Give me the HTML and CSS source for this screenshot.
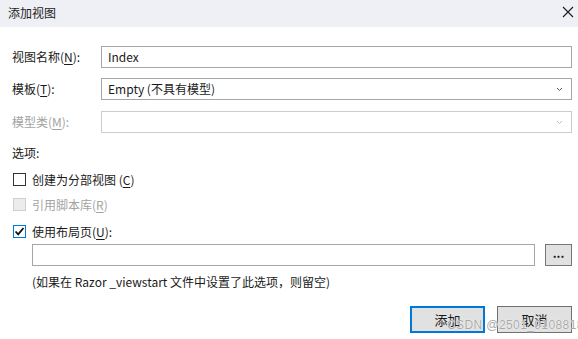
FILE: index.html
```html
<!DOCTYPE html>
<html lang="zh-CN">
<head>
  <meta charset="UTF-8">
  <title>添加视图</title>
  <link rel="stylesheet" href="styles.css">
</head>
<body>

  <div class="titlebar">
    <span class="title">添加视图</span>
    <svg class="close" width="12" height="12" viewBox="0 0 12 12">
      <path d="M1 1 L11 11 M11 1 L1 11" stroke="#1a1a1a" stroke-width="1.1" fill="none"/>
    </svg>
  </div>

  <div class="content">
    <div class="row first">
      <label>视图名称(<u>N</u>):</label>
      <div class="field">Index</div>
    </div>
    <div class="row">
      <label>模板(<u>T</u>):</label>
      <div class="field select">
        <span>Empty (不具有模型)</span>
        <svg class="chevron" width="7" height="5" viewBox="0 0 7 5"><path d="M1 1 L3.5 3.5 L6 1" stroke="#555" stroke-width="1" fill="none"/></svg>
      </div>
    </div>
    <div class="row third disabled">
      <label>模型类(<u>M</u>):</label>
      <div class="field select">
        <span></span>
        <svg class="chevron" width="7" height="5" viewBox="0 0 7 5"><path d="M1 1 L3.5 3.5 L6 1" stroke="#bbb" stroke-width="1" fill="none"/></svg>
      </div>
    </div>

    <div class="options-title">选项:</div>

    <div class="check-row first-check">
      <span class="box"></span>
      <span>创建为分部视图 (<u>C</u>)</span>
    </div>
    <div class="check-row second-check disabled">
      <span class="box"></span>
      <span>引用脚本库(<u>R</u>)</span>
    </div>
    <div class="check-row third-check">
      <span class="box checked">
        <svg width="11" height="11" viewBox="0 0 11 11"><path d="M1.5 5.5 L4.2 8.3 L9.5 2" stroke="#111" stroke-width="1.8" fill="none"/></svg>
      </span>
      <span>使用布局页(<u>U</u>):</span>
    </div>

    <div class="layout-row">
      <div class="field layout-field"></div>
      <div class="browse">...</div>
    </div>
    <div class="hint">(如果在 Razor _viewstart 文件中设置了此选项，则留空)</div>

    <div class="actions">
      <div class="btn primary">添加</div>
      <div class="btn">取消</div>
    </div>
  </div>

  <div class="watermark">CSDN @2501_91088181</div>

</body>
</html>
```

FILE: styles.css
```css
body {
  margin: 0;
  width: 578px;
  height: 339px;
  overflow: hidden;
  background-color: #fff;
  font-family: "Noto Sans CJK SC", "Noto Sans", sans-serif;
  font-size: 12px;
  color: #1a1a1a;
  position: relative;
}
u {
  text-decoration: underline;
  text-underline-offset: 2px;
}
.titlebar {
  height: 27px;
  background-color: #eff0f5;
  display: flex;
  align-items: center;
  justify-content: space-between;
  padding: 0 4px 0 8px;
}
.title {
  font-size: 12px;
  color: #222;
  margin-top: -2px;
}
.close {
  margin-top: -4px;
}
.content {
  padding: 19px 6px 0 12px;
}
.row {
  display: grid;
  grid-template-columns: 89px 1fr;
  align-items: center;
  height: 22px;
  margin-top: 10px;
}
.row.first {
  margin-top: 0;
}
.row.third {
  margin-top: 11px;
}
.row label {
  line-height: 16px;
}
.field {
  height: 22px;
  box-sizing: border-box;
  border: 1px solid #a6a6a6;
  background-color: #fff;
  padding: 0 6px;
  display: flex;
  align-items: center;
  line-height: 16px;
}
.select {
  justify-content: space-between;
  padding-right: 8px;
}
.chevron {
  margin-top: 1px;
}
.disabled {
  color: #a3a3a3;
}
.disabled .field {
  border-color: #cccccc;
}
.options-title {
  margin-top: 12px;
  line-height: 16px;
}
.check-row {
  display: flex;
  align-items: center;
  height: 13px;
  margin-left: 1px;
  gap: 6px;
  line-height: 16px;
}
.first-check {
  margin-top: 12px;
}
.second-check {
  margin-top: 12px;
}
.third-check {
  margin-top: 14px;
}
.box {
  width: 13px;
  height: 13px;
  box-sizing: border-box;
  border: 1px solid #333;
  background-color: #fff;
  display: flex;
  align-items: center;
  justify-content: center;
  flex-shrink: 0;
}
.disabled .box {
  border-color: #cfcfcf;
  background-color: #ececec;
}
.box.checked {
  border-color: #0078d7;
}
.layout-row {
  display: flex;
  margin-top: 6px;
  margin-left: 20px;
  gap: 10px;
}
.layout-field {
  width: 503px;
}
.browse {
  width: 27px;
  height: 22px;
  box-sizing: border-box;
  border: 1px solid #777;
  background-color: #e1e1e1;
  text-align: center;
  line-height: 16px;
  font-weight: bold;
}
.hint {
  margin-top: 8px;
  margin-left: 20px;
  line-height: 16px;
}
.actions {
  display: flex;
  justify-content: flex-end;
  gap: 12px;
  margin-top: 16px;
}
.btn {
  width: 75px;
  height: 27px;
  box-sizing: border-box;
  border: 1px solid #707070;
  background-color: #e1e1e1;
  display: flex;
  align-items: center;
  justify-content: center;
  font-size: 13px;
}
.btn.primary {
  border: 2px solid #0078d7;
}
.watermark {
  position: absolute;
  z-index: 1;
  left: 447px;
  top: 317px;
  white-space: nowrap;
  font-family: "Liberation Sans", sans-serif;
  font-size: 12px;
  line-height: 16px;
  letter-spacing: 0.4px;
  color: #a8a8a8;
  text-shadow: 0 0 1px #fff, 0 0 1px #fff;
}
```
